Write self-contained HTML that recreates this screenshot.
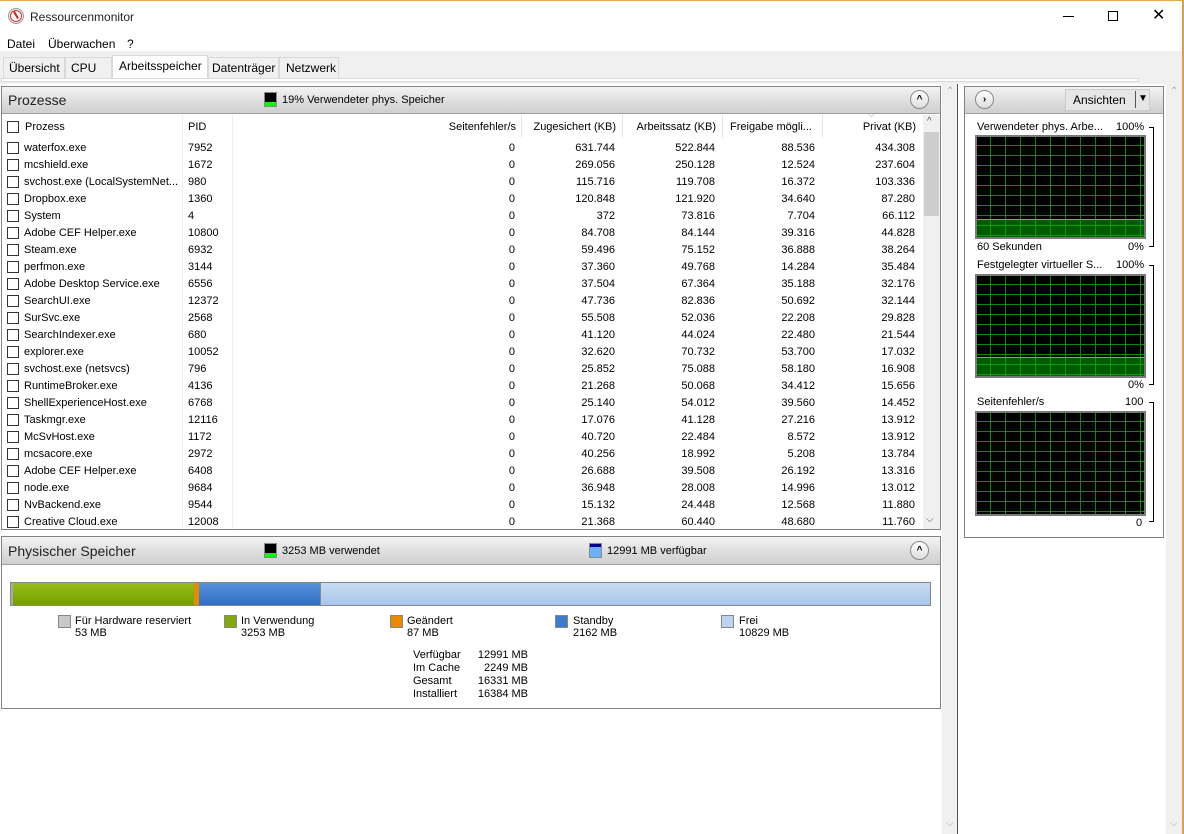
<!DOCTYPE html>
<html><head><meta charset="utf-8">
<style>
*{box-sizing:border-box;margin:0;padding:0}
body{width:1184px;height:834px;position:relative;background:#fff;font-family:"Liberation Sans",sans-serif;font-size:11px;color:#000;overflow:hidden}
.a{position:absolute;white-space:nowrap}
.hdr{position:absolute;background:linear-gradient(#f4f4f4,#dcdcdc 60%,#cfcfcf);border-bottom:1px solid #a0a0a0}
.cb{position:absolute;width:12px;height:12px;border:1px solid #333;background:#fff}
.r{text-align:right}
.up{position:absolute;width:19px;height:19px;border-radius:50%;border:1px solid #888;background:linear-gradient(#fff,#ddd);font-size:10px;text-align:center;line-height:17px;font-weight:bold}
.grid{position:absolute;border:2px solid #7a7a7a;background-color:#000;
background-image:linear-gradient(90deg,#0a8a0a 1px,transparent 1px),linear-gradient(#0a8a0a 1px,transparent 1px);
background-size:15px 10px;background-position:-2px 8px}
.brk{position:absolute;border:1px solid #000;border-left:none;width:5px}
.sw{position:absolute;width:13px;height:13px;border:1px solid #888}
</style></head><body>
<div class="a" style="left:0;top:0;width:1184px;height:1px;background:#e8a84a"></div>
<div class="a" style="left:1182px;top:0;width:2px;height:834px;background:#d9a050"></div>
<div class="a" style="left:8px;top:8px;width:16px;height:16px;border-radius:50%;border:1px solid #999;background:#eee"></div>
<div class="a" style="left:10px;top:10px;width:12px;height:12px;border-radius:50%;background:#fff;border:1px solid #c33"></div>
<div class="a" style="left:15px;top:11px;width:2px;height:8px;background:#c22;transform:rotate(-30deg)"></div>
<div class="a" style="left:30px;top:10px;font-size:12px;color:#222">Ressourcenmonitor</div>
<div class="a" style="left:1063px;top:16px;width:11px;height:1px;background:#000"></div>
<div class="a" style="left:1108px;top:11px;width:10px;height:10px;border:1px solid #000"></div>
<div class="a" style="left:1152px;top:5px;font-size:16px">✕</div>
<div class="a" style="left:7px;top:37px;font-size:12px">Datei</div>
<div class="a" style="left:48px;top:37px;font-size:12px">Überwachen</div>
<div class="a" style="left:127px;top:37px;font-size:12px">?</div>
<div class="a" style="left:0;top:51px;width:1182px;height:33px;background:#f0f0f0"></div>
<div class="a" style="left:3px;top:57px;width:62px;height:21px;border:1px solid #d9d9d9;border-bottom:none;background:#f0f0f0"></div>
<div class="a" style="left:9px;top:61px;font-size:12px">Übersicht</div>
<div class="a" style="left:65px;top:57px;width:47px;height:21px;border:1px solid #d9d9d9;border-bottom:none;background:#f0f0f0"></div>
<div class="a" style="left:71px;top:61px;font-size:12px">CPU</div>
<div class="a" style="left:112px;top:55px;width:96px;height:24px;border:1px solid #d9d9d9;border-bottom:none;background:#fff"></div>
<div class="a" style="left:119px;top:59px;font-size:12px">Arbeitsspeicher</div>
<div class="a" style="left:208px;top:57px;width:71px;height:21px;border:1px solid #d9d9d9;border-bottom:none;background:#f0f0f0"></div>
<div class="a" style="left:212px;top:61px;font-size:12px">Datenträger</div>
<div class="a" style="left:279px;top:57px;width:60px;height:21px;border:1px solid #d9d9d9;border-bottom:none;background:#f0f0f0"></div>
<div class="a" style="left:286px;top:61px;font-size:12px">Netzwerk</div>
<div class="a" style="left:1px;top:78px;width:1138px;height:4px;border:1px solid #d9d9d9;background:#fff"></div>
<div class="a" style="left:942px;top:84px;width:16px;height:750px;background:#f0f0f0;border-right:1px solid #555"></div>
<div class="a" style="left:946px;top:818px;color:#aaa;font-size:10px">⌵</div>
<div class="a" style="left:946px;top:86px;color:#aaa;font-size:10px">⌃</div>
<div class="a" style="left:1166px;top:84px;width:16px;height:750px;background:#f0f0f0"></div>
<div class="a" style="left:1170px;top:86px;color:#aaa;font-size:10px">⌃</div>
<div class="a" style="left:1170px;top:818px;color:#aaa;font-size:10px">⌵</div>
<div class="a" style="left:1px;top:86px;width:940px;height:444px;border:1px solid #828282"></div>
<div class="hdr" style="left:2px;top:87px;width:938px;height:27px"></div>
<div class="a" style="left:8px;top:92px;font-size:14px;color:#222">Prozesse</div>
<div class="a" style="left:265px;top:93px;width:11px;height:13px;background:#000;border-bottom:4px solid #0f0;outline:1px solid #888"></div>
<div class="a" style="left:282px;top:94px">19% Verwendeter phys. Speicher</div>
<div class="up" style="left:910px;top:90px">^</div>
<div class="a" style="left:182px;top:115px;width:1px;height:414px;background:#eee"></div>
<div class="a" style="left:232px;top:115px;width:1px;height:414px;background:#eee"></div>
<div class="a" style="left:521px;top:115px;width:1px;height:23px;background:#e5e5e5"></div>
<div class="a" style="left:622px;top:115px;width:1px;height:23px;background:#e5e5e5"></div>
<div class="a" style="left:722px;top:115px;width:1px;height:23px;background:#e5e5e5"></div>
<div class="a" style="left:822px;top:115px;width:1px;height:23px;background:#e5e5e5"></div>
<div class="cb" style="left:7px;top:121px"></div>
<div class="a" style="left:25px;top:121px">Prozess</div>
<div class="a" style="left:188px;top:121px">PID</div>
<div class="a r" style="left:400px;width:116px;top:121px">Seitenfehler/s</div>
<div class="a r" style="left:500px;width:116px;top:121px">Zugesichert (KB)</div>
<div class="a r" style="left:600px;width:116px;top:121px">Arbeitssatz (KB)</div>
<div class="a" style="left:730px;top:121px">Freigabe mögli...</div>
<div class="a r" style="left:800px;width:116px;top:121px">Privat (KB)</div>
<div class="a" style="left:868px;top:109px;color:#999;font-size:9px">⌵</div>
<div class="a" style="left:923px;top:115px;width:17px;height:414px;background:#f0f0f0"></div>
<div class="a" style="left:924px;top:132px;width:15px;height:84px;background:#cdcdcd"></div>
<div class="a" style="left:927px;top:116px;font-size:10px;color:#555">^</div>
<div class="a" style="left:926px;top:514px;font-size:10px;color:#555">⌵</div>
<div id="rows"></div>
<div class="a" style="left:1px;top:536px;width:940px;height:173px;border:1px solid #828282"></div>
<div class="hdr" style="left:2px;top:537px;width:938px;height:28px"></div>
<div class="a" style="left:8px;top:543px;font-size:14px;color:#222">Physischer Speicher</div>
<div class="a" style="left:265px;top:544px;width:11px;height:13px;background:#000;border-bottom:4px solid #0f0;outline:1px solid #888"></div>
<div class="a" style="left:282px;top:545px">3253 MB verwendet</div>
<div class="a" style="left:590px;top:544px;width:11px;height:13px;background:#6ab0ff;border-top:3px solid #00008b;outline:1px solid #888"></div>
<div class="a" style="left:607px;top:545px">12991 MB verfügbar</div>
<div class="up" style="left:910px;top:541px">^</div>
<div class="a" style="left:10px;top:582px;width:921px;height:24px;border:1px solid #888;background:linear-gradient(#c8dcf2,#a8c6ea)"></div>
<div class="a" style="left:11px;top:583px;width:2px;height:22px;background:#aaa"></div>
<div class="a" style="left:13px;top:583px;width:181px;height:22px;background:linear-gradient(#96be18,#74a000)"></div>
<div class="a" style="left:194px;top:583px;width:5px;height:22px;background:#e88a00"></div>
<div class="a" style="left:199px;top:583px;width:122px;height:22px;background:linear-gradient(#5892dc,#2f6ec4);border-right:1px solid #888"></div>
<div class="sw" style="left:58px;top:615px;background:#c8c8c8"></div>
<div class="a" style="left:75px;top:615px">Für Hardware reserviert<br>53 MB</div>
<div class="sw" style="left:224px;top:615px;background:#82a80c"></div>
<div class="a" style="left:241px;top:615px">In Verwendung<br>3253 MB</div>
<div class="sw" style="left:390px;top:615px;background:#e88a00"></div>
<div class="a" style="left:407px;top:615px">Geändert<br>87 MB</div>
<div class="sw" style="left:555px;top:615px;background:#3e7ccc"></div>
<div class="a" style="left:573px;top:615px">Standby<br>2162 MB</div>
<div class="sw" style="left:721px;top:615px;background:#bcd4f2"></div>
<div class="a" style="left:739px;top:615px">Frei<br>10829 MB</div>
<div class="a" style="left:413px;top:649px;line-height:13px">Verfügbar<br>Im Cache<br>Gesamt<br>Installiert</div>
<div class="a r" style="left:460px;width:68px;top:649px;line-height:13px">12991 MB<br>2249 MB<br>16331 MB<br>16384 MB</div>
<div class="a" style="left:964px;top:86px;width:200px;height:452px;border:1px solid #828282"></div>
<div class="hdr" style="left:965px;top:87px;width:198px;height:27px"></div>
<div class="up" style="left:975px;top:90px">›</div>
<div class="a" style="left:1065px;top:89px;width:85px;height:22px;background:#e6e6e6;border:1px solid #ccc"></div>
<div class="a" style="left:1073px;top:93px;font-size:12px">Ansichten</div>
<div class="a" style="left:1135px;top:91px;width:1px;height:17px;background:#555"></div>
<div class="a" style="left:1138px;top:93px;font-size:10px">▼</div>
<div class="a" style="left:977px;top:121px">Verwendeter phys. Arbe...</div>
<div class="a" style="left:1116px;top:121px">100%</div>
<div class="grid" style="left:975px;top:135px;width:171px;height:104px"></div>
<div class="a" style="left:977px;top:219px;width:167px;height:18px;background:rgba(0,180,0,.5)"></div>
<div class="a" style="left:977px;top:219px;width:167px;height:1px;background:#0f0"></div>
<div class="a" style="left:977px;top:241px">60 Sekunden</div>
<div class="a" style="left:1128px;top:241px">0%</div>
<div class="brk" style="left:1149px;top:127px;height:120px"></div>
<div class="a" style="left:977px;top:259px">Festgelegter virtueller S...</div>
<div class="a" style="left:1116px;top:259px">100%</div>
<div class="grid" style="left:975px;top:274px;width:171px;height:104px"></div>
<div class="a" style="left:977px;top:357px;width:167px;height:19px;background:rgba(0,180,0,.5)"></div>
<div class="a" style="left:977px;top:357px;width:167px;height:1px;background:#0f0"></div>
<div class="a" style="left:1128px;top:379px">0%</div>
<div class="brk" style="left:1149px;top:265px;height:120px"></div>
<div class="a" style="left:977px;top:396px">Seitenfehler/s</div>
<div class="a" style="left:1125px;top:396px">100</div>
<div class="grid" style="left:975px;top:411px;width:171px;height:105px"></div>
<div class="a" style="left:1136px;top:517px">0</div>
<div class="brk" style="left:1149px;top:402px;height:120px"></div>
<script>
var d=[["waterfox.exe",7952,"631.744","522.844","88.536","434.308"],["mcshield.exe",1672,"269.056","250.128","12.524","237.604"],["svchost.exe (LocalSystemNet...",980,"115.716","119.708","16.372","103.336"],["Dropbox.exe",1360,"120.848","121.920","34.640","87.280"],["System",4,"372","73.816","7.704","66.112"],["Adobe CEF Helper.exe",10800,"84.708","84.144","39.316","44.828"],["Steam.exe",6932,"59.496","75.152","36.888","38.264"],["perfmon.exe",3144,"37.360","49.768","14.284","35.484"],["Adobe Desktop Service.exe",6556,"37.504","67.364","35.188","32.176"],["SearchUI.exe",12372,"47.736","82.836","50.692","32.144"],["SurSvc.exe",2568,"55.508","52.036","22.208","29.828"],["SearchIndexer.exe",680,"41.120","44.024","22.480","21.544"],["explorer.exe",10052,"32.620","70.732","53.700","17.032"],["svchost.exe (netsvcs)",796,"25.852","75.088","58.180","16.908"],["RuntimeBroker.exe",4136,"21.268","50.068","34.412","15.656"],["ShellExperienceHost.exe",6768,"25.140","54.012","39.560","14.452"],["Taskmgr.exe",12116,"17.076","41.128","27.216","13.912"],["McSvHost.exe",1172,"40.720","22.484","8.572","13.912"],["mcsacore.exe",2972,"40.256","18.992","5.208","13.784"],["Adobe CEF Helper.exe",6408,"26.688","39.508","26.192","13.316"],["node.exe",9684,"36.948","28.008","14.996","13.012"],["NvBackend.exe",9544,"15.132","24.448","12.568","11.880"],["Creative Cloud.exe",12008,"21.368","60.440","48.680","11.760"]];
var h="";d.forEach(function(r,i){var y=142+i*17;
h+='<div class="cb" style="left:7px;top:'+y+'px"></div><div class="a" style="left:24px;top:'+y+'px">'+r[0]+'</div><div class="a" style="left:188px;top:'+y+'px">'+r[1]+'</div>';
h+='<div class="a r" style="left:400px;width:115px;top:'+y+'px">0</div>';
[615,715,815,915].forEach(function(x,j){h+='<div class="a r" style="left:'+(x-100)+'px;width:100px;top:'+y+'px">'+r[j+2]+'</div>'});});
document.getElementById("rows").innerHTML=h;
</script>
</body></html>
